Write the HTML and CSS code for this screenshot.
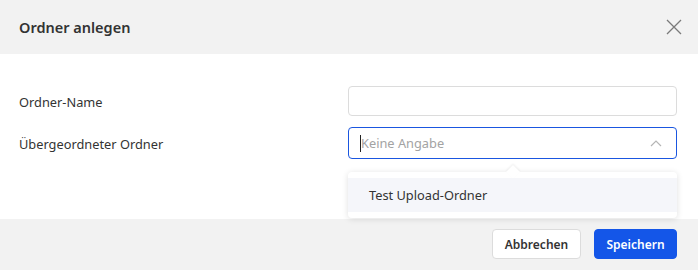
FILE: index.html
```html
<!DOCTYPE html>
<html lang="de">
<head>
    <meta charset="UTF-8">
    <meta name="viewport" content="width=device-width, initial-scale=1.0">
    <title>Ordner anlegen</title>
    <link rel="stylesheet" href="styles.css">
</head>
<body>
    <!-- Dialog -->
    <div class="modal">
        <div class="modal-header">
            <h1>Ordner anlegen</h1>
            <button class="close-btn" aria-label="Schließen">
                <svg width="16" height="16" viewBox="0 0 16 16">
                    <path d="M1 1 L15 15 M15 1 L1 15" stroke="#7a7a7a" stroke-width="1.3" fill="none"/>
                </svg>
            </button>
        </div>

        <div class="modal-body">
            <div class="form-row">
                <label>Ordner-Name</label>
                <input type="text" class="field">
            </div>
            <div class="form-row">
                <label>Übergeordneter Ordner</label>
                <div class="select-wrap">
                    <div class="field select active">
                        <span class="caret"></span>
                        <span class="placeholder">Keine Angabe</span>
                        <svg class="chevron" width="12" height="8" viewBox="0 0 12 8">
                            <path d="M1 7 L6 2 L11 7" stroke="#b5b5b5" stroke-width="1.2" fill="none"/>
                        </svg>
                    </div>
                    <!-- Dropdown -->
                    <div class="dropdown">
                        <div class="dropdown-item">Test Upload-Ordner</div>
                    </div>
                </div>
            </div>
        </div>

        <div class="modal-footer">
            <button class="btn btn-default">Abbrechen</button>
            <button class="btn btn-primary">Speichern</button>
        </div>
    </div>
</body>
</html>
```

FILE: styles.css
```css
/* Grundlayout */
body {
    margin: 0;
    font-family: "Noto Sans", Arial, sans-serif;
    color: #333;
    background: #fff;
}

.modal {
    width: 698px;
    height: 270px;
    display: flex;
    flex-direction: column;
}

/* Kopfbereich */
.modal-header {
    height: 54px;
    background: #f2f2f2;
    display: flex;
    align-items: center;
    justify-content: space-between;
    padding: 0 16px 0 19px;
}

.modal-header h1 {
    margin: 0;
    font-size: 14.5px;
    font-weight: 600;
    color: #333;
}

.close-btn {
    background: none;
    border: none;
    padding: 0;
    width: 16px;
    height: 16px;
    cursor: pointer;
}

/* Formular */
.modal-body {
    flex: 1;
    padding: 32px 21px 0 19px;
    display: flex;
    flex-direction: column;
    gap: 11px;
}

.form-row {
    display: grid;
    grid-template-columns: 329px 1fr;
    align-items: center;
}

.form-row label {
    font-size: 12.8px;
    color: #333;
    padding-top: 2px;
}

.field {
    box-sizing: border-box;
    width: 100%;
    height: 30px;
    border: 1px solid #dcdcdc;
    border-radius: 4px;
    background: #fff;
    font-family: inherit;
    font-size: 12.8px;
    outline: none;
}

.select-wrap {
    position: relative;
}

.select {
    height: 32px;
    display: flex;
    align-items: center;
    padding: 0 14px 0 11px;
}

.select.active {
    border-color: #1a56e0;
}

.caret {
    width: 1px;
    height: 17px;
    background: #222;
}

.placeholder {
    flex: 1;
    color: #a3a3a3;
}

/* Auswahlliste */
.dropdown {
    position: absolute;
    top: 45px;
    left: 0;
    right: 0;
    background: #fff;
    border-radius: 4px;
    box-shadow: 0 1px 6px rgba(0, 0, 0, 0.13);
    padding: 6px 0;
    z-index: 2;
}

.dropdown::before {
    content: "";
    position: absolute;
    top: -5px;
    left: 160px;
    width: 10px;
    height: 10px;
    background: #fff;
    transform: rotate(45deg);
    box-shadow: -1px -1px 2px rgba(0, 0, 0, 0.06);
}

.dropdown-item {
    position: relative;
    height: 34px;
    line-height: 34px;
    padding: 0 21px;
    background: #f5f6fa;
    font-size: 12.8px;
    color: #333;
}

/* Fußbereich */
.modal-footer {
    height: 51px;
    box-sizing: border-box;
    background: #f2f2f2;
    display: flex;
    justify-content: flex-end;
    align-items: flex-start;
    gap: 13px;
    padding: 10px 21px 0 0;
}

.btn {
    height: 30px;
    border-radius: 4px;
    font-family: inherit;
    font-size: 12px;
    font-weight: 600;
    cursor: pointer;
}

.btn-default {
    width: 89px;
    background: #fff;
    border: 1px solid #dcdcdc;
    color: #333;
}

.btn-primary {
    width: 83px;
    background: #1456e8;
    border: 1px solid #1456e8;
    color: #fff;
}
```
